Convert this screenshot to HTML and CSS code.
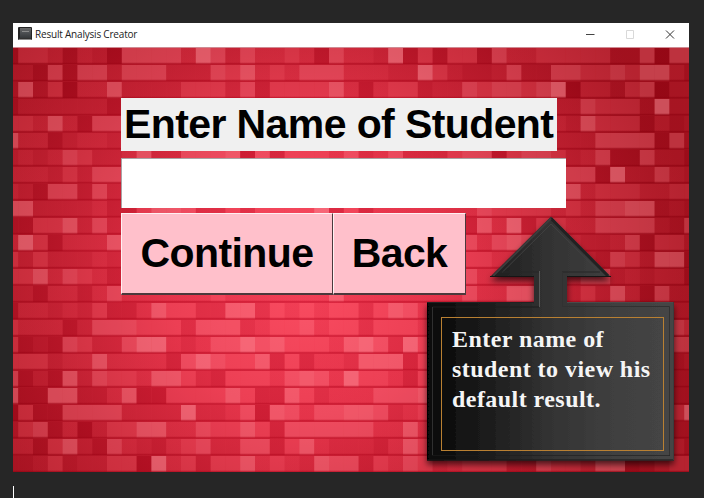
FILE: index.html
```html
<!DOCTYPE html>
<html lang="en">
<head>
<meta charset="utf-8">
<title>Result Analysis Creator</title>
<link rel="stylesheet" href="styles.css">
</head>
<body>
<main class="window">
  <header class="titlebar">
    <svg class="app-icon" width="14" height="14" viewBox="0 0 14 14">
      <defs><linearGradient id="icon" x1="0" y1="0" x2="0" y2="1"><stop offset="0" stop-color="#686868"/><stop offset=".4" stop-color="#505356"/><stop offset="1" stop-color="#35383a"/></linearGradient></defs>
      <rect width="14" height="13" rx="1" fill="#242424"/>
      <rect x="2" y="1" width="11" height="10" fill="url(#icon)"/>
      <path d="M1 12.4h12" stroke="#999"/>
      <path d="M4 4.5h7" stroke="#999" stroke-opacity=".8"/>
    </svg>
    <span class="title">Result Analysis Creator</span>
    <svg class="controls" width="90" height="11" viewBox="0 0 90 11" fill="none">
      <path d="M1 5.500h8.500" stroke="#444"/>
      <path d="M41.500 1.500h7v8h-7z" stroke="#d9d9d9"/>
      <path d="M81 1.500l8 8M89 1.500l-8 8" stroke="#333"/>
    </svg>
  </header>
  <section class="content">
    <svg class="bricks" id="bricks" width="676" height="424" viewBox="13 48 676 424"></svg>
    <form class="form">
      <label class="heading" for="student">Enter Name of Student</label>
      <input class="entry" id="student" type="text">
      <div class="buttons">
        <button class="btn continue" type="button">Continue</button>
        <button class="btn back" type="button">Back</button>
      </div>
    </form>
  </section>
  <aside class="callout">
    <svg class="callout-shape" width="270" height="265" viewBox="417 207 270 265">
      <defs>
        <linearGradient id="face" gradientUnits="userSpaceOnUse" x1="427" y1="0" x2="674" y2="0">
          <stop offset="0" stop-color="#060606"/><stop offset=".1" stop-color="#101010"/><stop offset=".25" stop-color="#1d1d1d"/><stop offset=".5" stop-color="#333"/><stop offset=".8" stop-color="#414141"/><stop offset="1" stop-color="#454545"/>
        </linearGradient>
        <filter id="shadow" x="-10%" y="-10%" width="120%" height="120%"><feDropShadow dx="0" dy="4" stdDeviation="3" flood-color="#000" flood-opacity=".65"/></filter>
      </defs>
      <path filter="url(#shadow)" fill="url(#face)" d="M551 216.500L611 277H567V302H674V460.500H427V302H534V277H490Z"/>
      <g fill="none">
        <path d="M551 218.500L608 276" stroke="#222" stroke-width="3"/>
        <path d="M551 218.500L493 276" stroke="#3c3c3c" stroke-width="2"/>
        <path d="M551 224L600 272.500M551 224L502 272.500" stroke="#414141"/>
        <path d="M500 272H540M562 272H600" stroke="#272727"/>
        <path d="M490 276.500H534M567 276.500H611" stroke="#151515"/>
        <path d="M539.500 271V307" stroke="#585858"/>
        <path d="M562.500 272V306.500H669.500V455.500" stroke="#313131"/>
        <path d="M432.500 307H539" stroke="#1c1c1c"/>
        <path d="M432.500 307V455" stroke="#303030"/>
        <path d="M432 455.500H670" stroke="#1d1d1d" stroke-opacity=".6"/>
        <path d="M427 302.500H534" stroke="#222"/>
        <path d="M567 302.500H674" stroke="#4a4a4a"/>
        <path d="M427 460H674" stroke="#181818"/>
        <path d="M673.500 302V460" stroke="#3c3c3c"/>
      </g>
    </svg>
    <p class="callout-text">Enter name of<br>student to view his<br>default result.</p>
  </aside>
</main>
<div class="caret"></div>
<script src="bricks.js"></script>
</body>
</html>
```
FILE: styles.css
```css
* { box-sizing: border-box; }

body {
  margin: 0;
  padding: 23px 15px 0 13px;
  height: 498px;
  overflow: hidden;
  background: #262626;
}

.window {
  position: relative;
  width: 676px;
  height: 449px;
}

.titlebar {
  display: flex;
  align-items: center;
  height: 25px;
  padding: 0 14px 2px 5px;
  background: #fff;
  border-bottom: 1px solid #cf8b93;
}

.app-icon { margin-right: 3px; }

.title {
  flex: 1;
  font: 10px/14px "Open Sans", "Noto Sans", sans-serif;
  letter-spacing: -0.2px;
  color: #222;
  white-space: nowrap;
}

.content {
  display: grid;
  height: 424px;
  overflow: hidden;
}

.bricks, .form { grid-area: 1 / 1; }

.form {
  z-index: 1;
  display: flex;
  flex-direction: column;
  align-items: flex-start;
  padding: 50px 0 0 108px;
  font-family: "Liberation Sans", Arial, sans-serif;
}

.heading {
  width: 436px;
  height: 53px;
  padding-left: 3px;
  background: #f0f0f0;
  font-weight: bold;
  font-size: 41px;
  line-height: 53px;
  letter-spacing: -0.6px;
  white-space: nowrap;
  color: #000;
}

.entry {
  width: 445px;
  height: 50px;
  margin-top: 7px;
  padding: 0 4px;
  border: 0;
  border-top: 1px solid #a9a4a6;
  border-left: 1px solid #a9a4a6;
  background: #fff;
  font: 40px "Liberation Sans", Arial, sans-serif;
}

.buttons {
  display: flex;
  margin-top: 5px;
}

.btn {
  height: 82px;
  padding: 0;
  border: solid;
  border-width: 1px 1px 2px 1px;
  border-color: #fff0f2 #4c393c #4c393c #fff0f2;
  background: #ffc0cb;
  font: bold 41px "Liberation Sans", Arial, sans-serif;
  letter-spacing: -0.6px;
  color: #000;
}

.continue { width: 212px; }
.back { width: 133px; }

.callout {
  position: absolute;
  left: 404px;
  top: 184px;
  width: 270px;
  height: 265px;
  overflow: hidden;
}

.callout-shape { display: block; }

.callout-text {
  position: absolute;
  left: 24px;
  top: 110px;
  width: 223px;
  height: 134px;
  margin: 0;
  padding: 6px 0 0 10px;
  border: 1px solid #b98032;
  font: bold 24px/30px "Liberation Serif", serif;
  letter-spacing: 0.45px;
  white-space: nowrap;
  color: #f5f5f5;
}

.caret {
  width: 1px;
  height: 12px;
  margin-top: 14px;
  background: #fff;
}
```
FILE: bricks.js
```js
// Brightness of every brick, 0 (dark) to 9 (light): [left part, right part].
const ROWS = [
  ["15541430666648636445416443815155", "164455555226066"],
  ["33161663666333657454666444338532", "236226655657742"],
  ["27250447333355536255557414552336", "566568044256033"],
  ["13333331", "3365552833"],
  ["55474166", "4375551423"],
  ["74413443", "3336666162"],
  ["34346533473366671625554634633356", "615665346116331"],
  ["44435366", "4661833643"],
  ["43166263", "4745554455"],
  ["77333342257763353555582524444444", "655554546677232"],
  ["11557363", "2748255446666326"],
  ["48514447", "6467644433461553"],
  ["53533343", "5544444432653771"],
  ["55746542", "6444444466343441"],
  ["33144246444444544444447444444446", "447744353741633"],
  ["14434352247553377354545535764", "33"],
  ["54441366655536663455645535554", "65"],
  ["51216533688434668675554786385", "66"],
  ["55534474444268655725244377725", "23"],
  ["61317365547753255546764855425", "22"],
  ["71177224711555575227534446667", "22"],
  ["05116666333383346176466776345", "58"],
  ["25614035577446557526666664474", "22"],
  ["44157316432456336625743332475", "42"],
  ["22352335508452557454376625465345", "552265547712455"]
];
const COLS = 47;
const PITCH_X = 14.8;
const PITCH_Y = 17;

const parts = [`<defs>
  <radialGradient id="glow" gradientUnits="userSpaceOnUse" cx="305" cy="280" r="390">
    <stop offset="0" stop-color="#fa485e"/><stop offset=".35" stop-color="#ec3b51"/>
    <stop offset=".65" stop-color="#ce2c3d"/><stop offset="1" stop-color="#b31e2b"/>
  </radialGradient>
  <radialGradient id="dark" gradientUnits="userSpaceOnUse" cx="305" cy="280" r="360">
    <stop offset="0" stop-color="#cc1430"/><stop offset=".5" stop-color="#b80c22"/><stop offset="1" stop-color="#8e0210"/>
  </radialGradient></defs>
  <rect x="13" y="48" width="676" height="424" fill="url(#glow)"/>`];

ROWS.forEach(([left, right], r) => {
  const row = left.padEnd(COLS - right.length, "4") + right;
  const y = 48 + r * PITCH_Y;
  for (let c = 0; c < COLS; c++) {
    const level = Number(row[c]);
    const x = 18.2 + (c - 1) * PITCH_X;
    const fill = level < 5 ? "url(#dark)" : "#ffb0b5";
    const alpha = level < 5 ? (5 - level) * 0.16 : (level - 5) * 0.1 + 0.04;
    parts.push(`<rect x="${x.toFixed(1)}" y="${y}" width="${PITCH_X}" height="16" fill="${fill}" fill-opacity="${alpha.toFixed(2)}"/>`);
  }
  parts.push(`<rect x="13" y="${y + 15}" width="676" height="2" fill="url(#dark)" fill-opacity=".6"/>`);
  parts.push(`<rect x="13" y="${y + 14}" width="676" height="1" fill="url(#dark)" fill-opacity=".15"/>`);
});
document.getElementById("bricks").innerHTML = parts.join("");
```
